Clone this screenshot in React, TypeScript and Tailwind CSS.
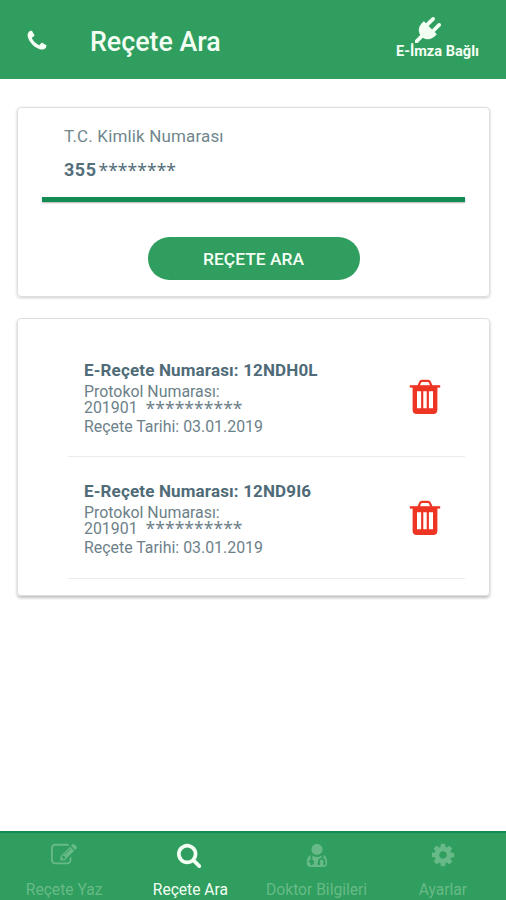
import React from 'react';

const ICONS = {
  phone:
    'M1600 1240q0 27-10 70.5t-21 68.5q-21 50-122 106-94 51-186 51-27 0-53-3.5t-57.5-12.5-47-14.5-55.5-20.5-49-18q-98-35-175-83-127-79-264-216t-216-264q-48-77-83-175-3-9-18-49t-20.5-55.5-14.5-47-12.5-57.5-3.5-53q0-92 51-186 56-101 106-122 25-11 68.5-21t70.5-10q14 0 21 3 18 6 53 76 11 19 30 54t35 63.5 31 53.5q3 4 17.5 25t21.5 35.5 7 28.5q0 20-28.5 50t-62 55-62 53-28.5 46q0 9 5 22.5t8.5 20.5 14 24 11.5 19q76 137 174 235t235 174q2 1 19 11.5t24 14 20.5 8.5 22.5 5q18 0 46-28.5t53-62 55-62 50-28.5q14 0 28.5 7t35.5 21.5 25 17.5q25 15 53.5 31t63.5 35 54 30q70 35 76 53 3 7 3 21z',
  plug:
    'M1755 453q37 38 37 90.5t-37 90.5l-401 400 150 150-160 160q-163 163-389.5 186.5t-411.5-100.5l-362 362h-181v-181l362-362q-124-185-100.5-411.5t186.5-389.5l160-160 150 150 400-401q38-37 91-37t90 37 37 90.5-37 90.5l-400 401 234 234 401-400q38-37 91-37t90 37z',
  edit:
    'M888 1184l116-116-152-152-116 116v56h96v96h56zm440-720q-16-16-33 1l-350 350q-17 17-1 33t33-1l350-350q17-17 1-33zm80 594v190q0 119-84.5 203.5t-203.5 84.5h-832q-119 0-203.5-84.5t-84.5-203.5v-832q0-119 84.5-203.5t203.5-84.5h832q63 0 117 25 15 7 18 23 3 17-9 29l-49 49q-14 14-32 8-23-6-45-6h-832q-66 0-113 47t-47 113v832q0 66 47 113t113 47h832q66 0 113-47t47-113v-126q0-13 9-22l64-64q15-15 35-7t20 29zm-96-738l288 288-672 672h-288v-288zm444 132l-92 92-288-288 92-92q28-28 68-28t68 28l152 152q28 28 28 68t-28 68z',
  search:
    'M1152 832q0-185-131.5-316.5t-316.5-131.5-316.5 131.5-131.5 316.5 131.5 316.5 316.5 131.5 316.5-131.5 131.5-316.5zm512 832q0 52-38 90t-90 38q-54 0-90-38l-343-342q-179 124-399 124-143 0-273.5-55.5t-225-150-150-225-55.5-273.5 55.5-273.5 150-225 225-150 273.5-55.5 273.5 55.5 225 150 150 225 55.5 273.5q0 220-124 399l343 343q37 37 37 90z',
  doctor:
    'M448 1472q0 26-19 45t-45 19-45-19-19-45 19-45 45-19 45 19 19 45zm1152-5q0 121-73 190t-194 69h-874q-121 0-194-69t-73-190q0-68 5.5-131t24-138 47.5-132.5 81-103 120-60.5q-22 52-22 120v203q-58 20-93 70t-35 111q0 80 56 136t136 56 136-56 56-136q0-61-35.5-111t-92.5-70v-203q0-62 25-93 132 104 295 104t295-104q25 31 25 93v64q-106 0-181 75t-75 181v89q-32 29-32 71 0 40 28 68t68 28 68-28 28-68q0-42-32-71v-89q0-52 38-90t90-38 90 38 38 90v89q-32 29-32 71 0 40 28 68t68 28 68-28 28-68q0-42-32-71v-89q0-68-34.5-127.5t-93.5-93.5q0-10 .5-42.5t0-48-2.5-41.5-7-47-13-40q68 15 120 60.5t81 103 47.5 132.5 24 138 5.5 131zm-320-955q0 159-112.5 271.5t-271.5 112.5-271.5-112.5-112.5-271.5 112.5-271.5 271.5-112.5 271.5 112.5 112.5 271.5z',
  cog:
    'M1152 896q0-106-75-181t-181-75-181 75-75 181 75 181 181 75 181-75 75-181zm512-109v222q0 12-8 23t-20 13l-185 28q-19 54-39 91 35 50 107 138 10 12 10 25t-9 23q-27 37-99 108t-94 71q-12 0-26-9l-138-108q-44 23-91 38-16 136-29 186-7 28-36 28h-222q-14 0-24.5-8.5t-11.5-21.5l-28-184q-49-16-90-37l-141 107q-10 9-25 9-14 0-25-11-126-114-165-168-7-10-7-23 0-12 8-23 15-21 51-66.5t54-70.5q-27-50-41-99l-183-27q-13-2-21-12.5t-8-23.5v-222q0-12 8-23t19-13l186-28q14-46 39-92-40-57-107-138-10-12-10-24 0-10 9-23 26-36 98.5-107.5t94.5-71.5q13 0 26 10l138 107q44-23 91-38 16-136 29-186 7-28 36-28h222q14 0 24.5 8.5t11.5 21.5l28 184q49 16 90 37l142-107q9-9 24-9 13 0 25 10 129 119 165 170 7 8 7 22 0 12-8 23-15 21-51 66.5t-54 70.5q26 50 41 98l183 28q13 2 21 12.5t8 23.5z',
};

function Icon({ name, className }: { name: keyof typeof ICONS; className: string }) {
  return (
    <svg viewBox="0 0 1792 1792" fill="currentColor" className={className}>
      <path d={ICONS[name]} />
    </svg>
  );
}

function TrashIcon() {
  return (
    <svg viewBox="0 0 32 36" className="w-8 h-9 text-[#ee3524]" fill="none" stroke="currentColor">
      <path d="M9.5 7l1.6-3.8q.5-1.4 1.9-1.4h6q1.4 0 1.9 1.4L22.5 7" strokeWidth="2.2" />
      <path d="M.8 7.4h30.4" strokeWidth="2.4" />
      <path d="M5.8 8v22.8q0 2 2 2h16.4q2 0 2-2V8" strokeWidth="4.4" />
      <path d="M4 10h24M6 31.4h20" strokeWidth="4.4" />
      <path d="M13.2 11v20M18.8 11v20" strokeWidth="2.2" />
    </svg>
  );
}

const prescriptions = [
  { no: '12NDH0L', protocol: '201901', date: '03.01.2019' },
  { no: '12ND9I6', protocol: '201901', date: '03.01.2019' },
];

const tabs: { label: string; icon: keyof typeof ICONS; active?: boolean }[] = [
  { label: 'Reçete Yaz', icon: 'edit' },
  { label: 'Reçete Ara', icon: 'search', active: true },
  { label: 'Doktor Bilgileri', icon: 'doctor' },
  { label: 'Ayarlar', icon: 'cog' },
];

function Stars({ count }: { count: number }) {
  return (
    <span className="block font-['Noto_Sans',sans-serif] text-[17.6px] font-normal leading-4 tracking-normal">
      {'*'.repeat(count)}
    </span>
  );
}

export default function App() {
  return (
    <div className="flex flex-col h-[900px] w-[506px] bg-white font-['Roboto',sans-serif] overflow-hidden">
      <header className="flex h-[79px] shrink-0 items-center bg-[#2f9e5e] pl-[25px] pr-[27px] text-[#f4fff4]">
        <Icon name="phone" className="w-6 h-6 mt-0.5" />
        <h1 className="ml-[41px] mt-[5px] flex-1 text-[26.8px] font-medium">Reçete Ara</h1>
        <div className="flex flex-col items-center pb-[3px]">
          <Icon name="plug" className="mr-[19px] w-[26px] h-[26px]" />
          <span className="text-[14.6px] leading-4 font-bold">E-İmza Bağlı</span>
        </div>
      </header>

      <main className="flex flex-1 flex-col gap-[21px] pl-[17px] pr-4 pt-7">
        <section className="h-[190px] rounded-sm border border-[#dedede] px-6 shadow-[0_1px_3px_rgba(0,0,0,0.2)]">
          <div className="pl-[22px] pt-[18px]">
            <p className="text-[17px] leading-[21px] tracking-[0.15px] text-[#71868c]">T.C. Kimlik Numarası</p>
            <p className="mt-[13px] flex text-lg leading-5 font-bold tracking-[0.5px] text-[#546e7a]">
              355
              <span className="ml-0.5 mt-0.5"><Stars count={8} /></span>
            </p>
          </div>
          <div className="mt-[17px] h-[5px] bg-[#128c52] shadow-[0_1px_2px_rgba(0,0,0,0.3)]" />
          <button className="mx-auto mt-[35px] block h-[43px] w-[212px] rounded-full bg-[#2f9e5e] pt-0.5 text-[17.4px] font-medium text-[#f4fff4]">
            REÇETE ARA
          </button>
        </section>

        <section className="h-[278px] rounded-sm border border-[#dedede] pl-[50px] pr-6 shadow-[0_2px_3px_rgba(0,0,0,0.25)]">
          {prescriptions.map((p, i) => (
            <div
              key={p.no}
              className={`flex justify-between border-b border-[#ebebeb] pl-4 pr-6 ${i === 0 ? 'h-[138px] pt-10' : 'h-[122px] pt-[23px]'}`}
            >
              <div className="text-[15.9px] leading-[18px] text-[#6d8189]">
                <p className="text-[17px] leading-[23px] font-bold tracking-[0.15px] text-[#4f6b78]">E-Reçete Numarası: {p.no}</p>
                <p className="pt-px leading-[17px]">Protokol Numarası:</p>
                <p className="flex h-4 leading-4">
                  {p.protocol}
                  <span className={i === 0 ? 'ml-2' : 'ml-2 -mt-px'}><Stars count={10} /></span>
                </p>
                <p className="leading-[22px]">Reçete Tarihi: {p.date}</p>
              </div>
              <button className="mt-5 h-9">
                <TrashIcon />
              </button>
            </div>
          ))}
        </section>
      </main>

      <nav className="grid h-[69px] shrink-0 grid-cols-4 border-t-2 border-[#128c52] bg-[#2f9e5e] pl-px">
        {tabs.map((tab) => (
          <div
            key={tab.label}
            className={`flex flex-col items-center pt-[9px] ${tab.active ? 'text-[#f4fff4]' : 'text-[#67ba87]'}`}
          >
            <Icon name={tab.icon} className="w-[26px] h-[26px]" />
            <span className="mt-3 text-[15.6px] leading-5 whitespace-nowrap">{tab.label}</span>
          </div>
        ))}
      </nav>
    </div>
  );
}
